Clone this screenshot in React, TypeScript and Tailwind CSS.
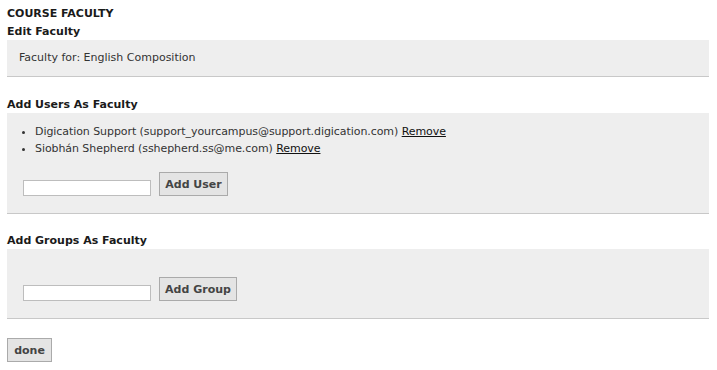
import React from "react";

const font = { fontFamily: '"DejaVu Sans", Verdana, sans-serif' };

function Btn({ children, w }: { children: React.ReactNode; w: string }) {
  return (
    <button
      className={`h-[24px] ${w} border border-[#aaaaaa] bg-[#e4e4e4] text-[11px] font-bold text-[#444444] leading-none flex items-center justify-center`}
    >
      {children}
    </button>
  );
}

function Input() {
  return <input className="h-[16px] w-[128px] border border-[#bdbdbd] bg-white" />;
}

export default function App() {
  return (
    <div className="w-[717px] h-[370px] bg-white pl-[7px] pr-[8px] text-[11px] text-[#222222]" style={font}>
      <div className="pt-[6px] font-bold leading-[16px] text-[#1a1a1a]">COURSE FACULTY</div>
      <div className="pt-[2px] font-bold leading-[16px] text-[#1a1a1a]">Edit Faculty</div>
      <div className="h-[37px] bg-[#eeeeee] border-b border-[#c8c8c8] pl-[12px] flex items-center text-[#333333]">
        Faculty for: English Composition
      </div>

      <div className="pt-[19px] font-bold leading-[17px] text-[#1a1a1a]">Add Users As Faculty</div>
      <div className="h-[101px] bg-[#eeeeee] border-b border-[#c8c8c8] pt-[10px] text-[#333333]">
        <ul className="pl-[28px] list-disc leading-[17px] tracking-[-0.07px]">
          <li>
            Digication Support (support_yourcampus@support.digication.com){" "}
            <a className="underline text-[#111111]">Remove</a>
          </li>
          <li>
            Siobhán Shepherd (sshepherd.ss@me.com){" "}
            <a className="underline text-[#111111]">Remove</a>
          </li>
        </ul>
        <div className="mt-[15px] pl-[16px] flex items-end gap-[8px]">
          <Input />
          <Btn w="w-[69px]">Add User</Btn>
        </div>
      </div>

      <div className="pt-[18px] font-bold leading-[17px] text-[#1a1a1a]">Add Groups As Faculty</div>
      <div className="h-[70px] bg-[#eeeeee] border-b border-[#c8c8c8] pt-[28px]">
        <div className="pl-[16px] flex items-end gap-[8px]">
          <Input />
          <Btn w="w-[78px]">Add Group</Btn>
        </div>
      </div>

      <div className="pt-[19px]">
        <Btn w="w-[45px]">done</Btn>
      </div>
    </div>
  );
}
